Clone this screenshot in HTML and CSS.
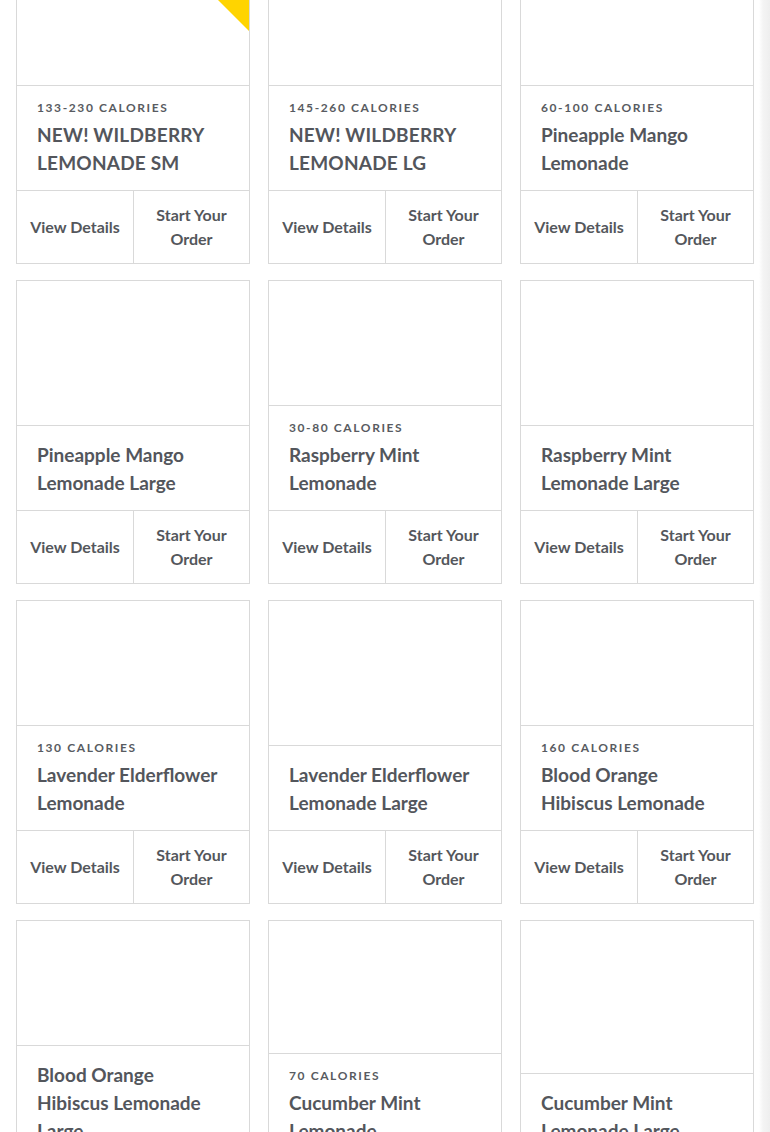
FILE: index.html
```html
<!DOCTYPE html>
<html lang="en">
<head>
<meta charset="utf-8">
<title>Lemonades</title>
<link rel="stylesheet" href="styles.css">
</head>
<body>
<main class="grid">
  <article class="card">
    <span class="ribbon"></span>
    <div class="media"></div>
    <div class="info"><p class="cal">133-230 Calories</p><h3 class="name upper">NEW! WILDBERRY LEMONADE SM</h3></div>
    <div class="actions"><a class="btn">View Details</a><a class="btn">Start Your Order</a></div>
  </article>
  <article class="card">
    <div class="media"></div>
    <div class="info"><p class="cal">145-260 Calories</p><h3 class="name upper">NEW! WILDBERRY LEMONADE LG</h3></div>
    <div class="actions"><a class="btn">View Details</a><a class="btn">Start Your Order</a></div>
  </article>
  <article class="card">
    <div class="media"></div>
    <div class="info"><p class="cal">60-100 Calories</p><h3 class="name">Pineapple Mango Lemonade</h3></div>
    <div class="actions"><a class="btn">View Details</a><a class="btn">Start Your Order</a></div>
  </article>

  <article class="card">
    <div class="media"></div>
    <div class="info"><h3 class="name">Pineapple Mango Lemonade Large</h3></div>
    <div class="actions"><a class="btn">View Details</a><a class="btn">Start Your Order</a></div>
  </article>
  <article class="card">
    <div class="media"></div>
    <div class="info"><p class="cal">30-80 Calories</p><h3 class="name">Raspberry Mint Lemonade</h3></div>
    <div class="actions"><a class="btn">View Details</a><a class="btn">Start Your Order</a></div>
  </article>
  <article class="card">
    <div class="media"></div>
    <div class="info"><h3 class="name">Raspberry Mint Lemonade Large</h3></div>
    <div class="actions"><a class="btn">View Details</a><a class="btn">Start Your Order</a></div>
  </article>

  <article class="card">
    <div class="media"></div>
    <div class="info"><p class="cal">130 Calories</p><h3 class="name">Lavender Elderflower Lemonade</h3></div>
    <div class="actions"><a class="btn">View Details</a><a class="btn">Start Your Order</a></div>
  </article>
  <article class="card">
    <div class="media"></div>
    <div class="info"><h3 class="name">Lavender Elderflower Lemonade Large</h3></div>
    <div class="actions"><a class="btn">View Details</a><a class="btn">Start Your Order</a></div>
  </article>
  <article class="card">
    <div class="media"></div>
    <div class="info"><p class="cal">160 Calories</p><h3 class="name">Blood Orange Hibiscus Lemonade</h3></div>
    <div class="actions"><a class="btn">View Details</a><a class="btn">Start Your Order</a></div>
  </article>

  <article class="card">
    <div class="media"></div>
    <div class="info"><h3 class="name">Blood Orange Hibiscus Lemonade Large</h3></div>
    <div class="actions"><a class="btn">View Details</a><a class="btn">Start Your Order</a></div>
  </article>
  <article class="card">
    <div class="media"></div>
    <div class="info"><p class="cal">70 Calories</p><h3 class="name">Cucumber Mint Lemonade</h3></div>
    <div class="actions"><a class="btn">View Details</a><a class="btn">Start Your Order</a></div>
  </article>
  <article class="card">
    <div class="media"></div>
    <div class="info"><h3 class="name">Cucumber Mint Lemonade Large</h3></div>
    <div class="actions"><a class="btn">View Details</a><a class="btn">Start Your Order</a></div>
  </article>
</main>
</body>
</html>
```

FILE: styles.css
```css
html {
  background: linear-gradient(to right, #ffffff 0, #ffffff 759px, #f4f4f4 763px, #eeeeee 770px);
  min-height: 100%;
}
body {
  margin: 0;
  font-family: Lato, "Open Sans", sans-serif;
  color: #53565c;
}
.grid {
  display: grid;
  grid-template-columns: repeat(3, 234px);
  column-gap: 18px;
  row-gap: 16px;
  padding: 0 16px;
  margin-top: -40px;
  align-items: stretch;
}
.card {
  position: relative;
  display: flex;
  flex-direction: column;
  border: 1px solid #d9d9d9;
  background: #fff;
  overflow: hidden;
}
.ribbon {
  position: absolute;
  top: 0;
  right: 0;
  width: 0;
  height: 0;
  border-top: 70px solid #ffd400;
  border-left: 70px solid transparent;
}
.media {
  flex: 1 1 auto;
  min-height: 124px;
}
.info {
  border-top: 1px solid #d9d9d9;
  padding: 15px 28px 13px 20px;
}
.cal {
  margin: 0 0 6px;
  font-size: 12px;
  line-height: 14px;
  font-weight: 700;
  letter-spacing: 1.6px;
  text-transform: uppercase;
  color: #585b61;
}
.name {
  margin: 0;
  font-size: 19px;
  line-height: 28px;
  font-weight: 700;
  color: #53565c;
}
.name.upper {
  letter-spacing: 0.2px;
}
.actions {
  display: grid;
  grid-template-columns: 116px 1fr;
  border-top: 1px solid #d9d9d9;
  height: 72px;
}
.btn {
  display: flex;
  align-items: center;
  justify-content: center;
  text-align: center;
  font-size: 16px;
  line-height: 24px;
  font-weight: 700;
  color: #54575c;
  padding: 0 20px;
}
.btn:first-child {
  padding: 0 4px;
  white-space: nowrap;
}
.btn + .btn {
  border-left: 1px solid #d9d9d9;
}
```
